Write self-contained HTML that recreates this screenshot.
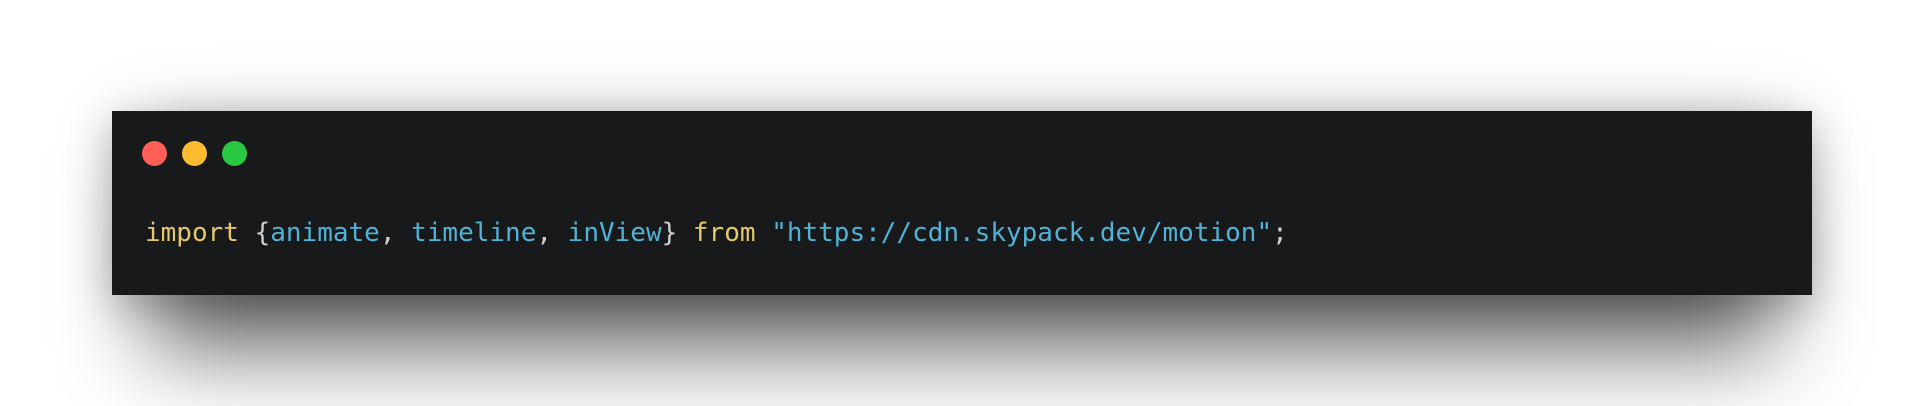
<!DOCTYPE html>
<html><head><meta charset="utf-8"><style>
html,body{margin:0;padding:0;}
body{width:1924px;height:406px;background:#fff;position:relative;overflow:hidden;}
.sh{position:absolute;left:150px;top:150px;width:1624px;height:200px;background:rgba(0,0,0,0.6);filter:blur(45px);}
.card{position:absolute;left:112px;top:111px;width:1700px;height:184px;background:#18191b;box-shadow:0 10px 40px rgba(0,0,0,0.25);}
.dot{position:absolute;top:141px;width:25px;height:25px;border-radius:50%;}
.code{position:absolute;left:145px;top:220px;font-family:"DejaVu Sans Mono","Liberation Mono",monospace;font-size:26px;line-height:26px;white-space:pre;color:#cfcfcf;}
.k{color:#e6c86a}.b{color:#4fb2d6}
</style></head><body>
<div class="sh"></div>
<div class="card"></div>
<div class="dot" style="left:142px;background:#fe5f57"></div>
<div class="dot" style="left:182px;background:#febc2e"></div>
<div class="dot" style="left:222px;background:#28c840"></div>
<div class="code"><span class="k">import</span> {<span class="b">animate</span>, <span class="b">timeline</span>, <span class="b">inView</span>} <span class="k">from</span> <span class="b">"https://cdn.skypack.dev/motion"</span>;</div>
</body></html>
